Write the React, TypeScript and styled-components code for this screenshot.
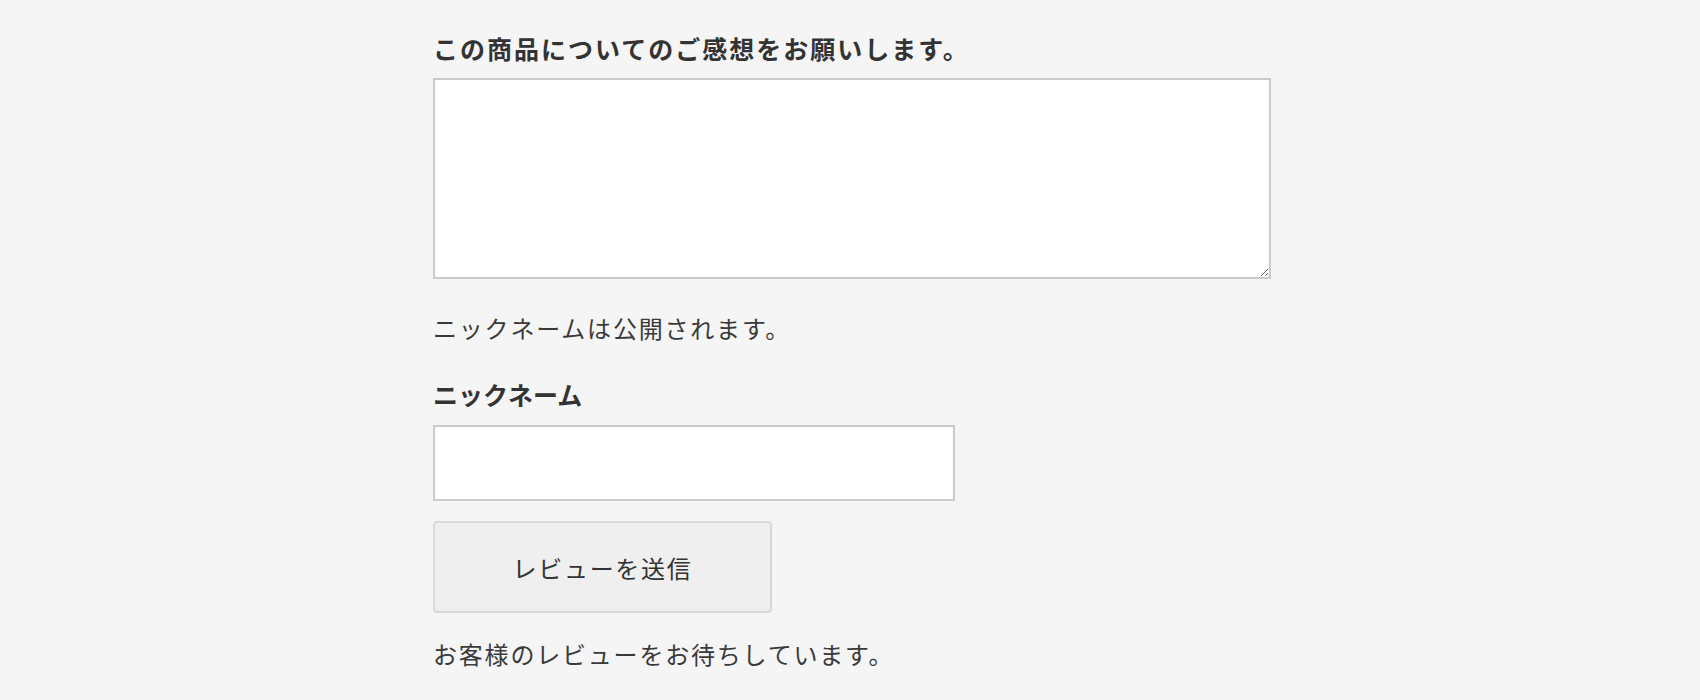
import styled, { createGlobalStyle } from "styled-components";

const GlobalStyle = createGlobalStyle`
  html, body {
    margin: 0;
    padding: 0;
    background: #f5f5f5;
  }
  body {
    font-family: "Noto Sans CJK JP", "Noto Sans", sans-serif;
    color: #333;
  }
`;

const Page = styled.div`
  min-height: 700px;
  padding: 30px 0 0 433px;
  box-sizing: border-box;
`;

const Form = styled.form`
  display: flex;
  flex-direction: column;
  align-items: flex-start;
`;

const Label = styled.label<{ $gap?: number; $spacing?: number }>`
  display: block;
  font-size: 25px;
  line-height: 36px;
  font-weight: 700;
  color: #333;
  letter-spacing: ${(p) => p.$spacing ?? 0}px;
  margin-bottom: ${(p) => p.$gap ?? 12}px;
`;

const Note = styled.p<{ $top: number }>`
  margin: ${(p) => p.$top}px 0 0;
  font-size: 24px;
  line-height: 36px;
  letter-spacing: 1.8px;
  color: #3a3a3a;
`;

const Comment = styled.textarea`
  box-sizing: border-box;
  width: 838px;
  height: 201px;
  border: 2px solid #cbcbcb;
  background: #fff;
  font-family: inherit;
  font-size: 22px;
  padding: 8px;
  resize: both;
  outline: none;
`;

const NickInput = styled.input`
  box-sizing: border-box;
  width: 522px;
  height: 76px;
  border: 2px solid #cbcbcb;
  background: #fff;
  font-family: inherit;
  font-size: 22px;
  padding: 0 12px;
  outline: none;
`;

const Submit = styled.button`
  box-sizing: border-box;
  margin-top: 20px;
  width: 339px;
  height: 92px;
  border: 2px solid #d9d9d9;
  border-radius: 4px;
  background: #efefef;
  font-family: inherit;
  font-size: 24px;
  letter-spacing: 1.7px;
  color: #333;
  cursor: pointer;
`;

export default function App() {
  return (
    <Page>
      <GlobalStyle />
      <Form onSubmit={(e) => e.preventDefault()}>
        <Label htmlFor="comment" $spacing={2}>
          この商品についてのご感想をお願いします。
        </Label>
        <Comment id="comment" />
        <Note $top={31}>ニックネームは公開されます。</Note>
        <Label htmlFor="nick" style={{ marginTop: 30 }} $gap={13}>
          ニックネーム
        </Label>
        <NickInput id="nick" type="text" />
        <Submit type="submit">レビューを送信</Submit>
        <Note $top={23}>お客様のレビューをお待ちしています。</Note>
      </Form>
    </Page>
  );
}
